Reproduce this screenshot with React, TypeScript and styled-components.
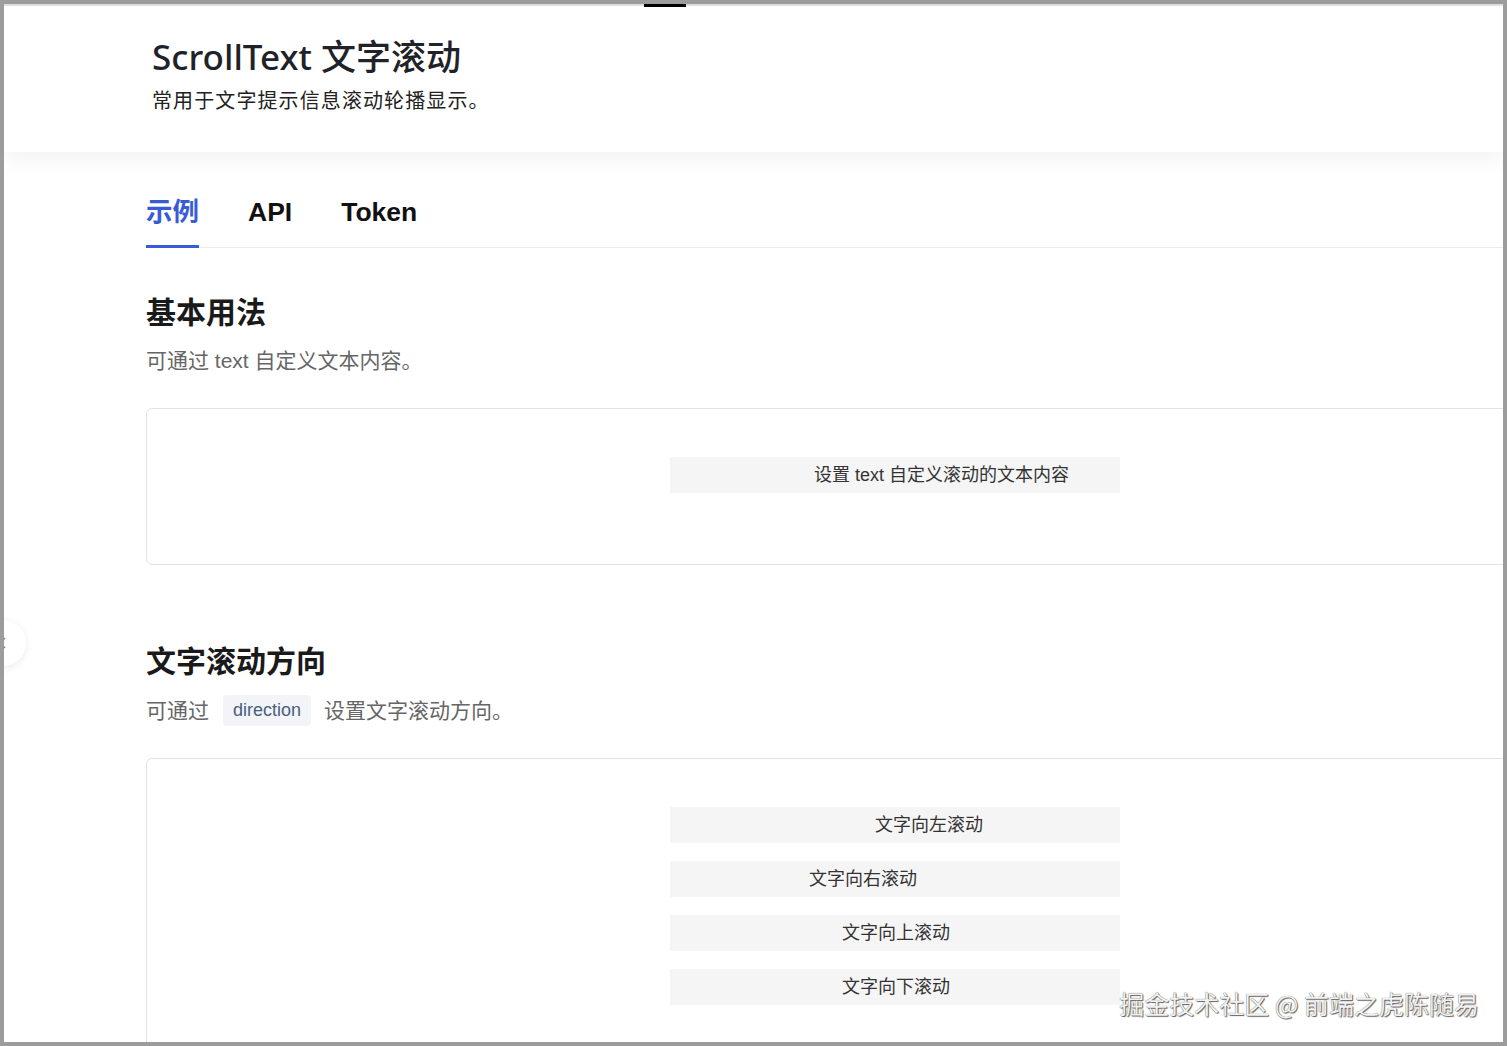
import React from "react";
import styled, { createGlobalStyle } from "styled-components";

const GlobalStyle = createGlobalStyle`
  html, body { margin: 0; padding: 0; background: #9c9c9c; }
  body { font-family: "Liberation Sans", "Noto Sans CJK SC", sans-serif; }
  * { box-sizing: border-box; }
`;

const Frame = styled.div`
  position: relative;
  margin: 4px;
  width: 1499px;
  height: 1038px;
  overflow: hidden;
  background: #ffffff;
`;

const TopMarker = styled.div`
  position: absolute;
  top: 0;
  left: 640px;
  width: 42px;
  height: 3px;
  background: #000;
  z-index: 5;
`;

const Header = styled.header`
  position: relative;
  z-index: 2;
  height: 148px;
  border-top: 2px solid #dedede;
  padding: 30px 0 0 148px;
  display: flex;
  flex-direction: column;
  gap: 8px;
  background: #fff;
  box-shadow: 0 10px 18px rgba(0, 0, 0, 0.045);
`;

const Title = styled.h1`
  margin: 0;
  font-family: "Noto Sans", "Noto Sans CJK SC", sans-serif;
  font-size: 35px;
  line-height: 42px;
  font-weight: 500;
  color: #1f2329;
`;

const Subtitle = styled.p`
  margin: 0;
  font-family: "Noto Sans CJK SC", sans-serif;
  font-size: 20px;
  line-height: 28px;
  letter-spacing: 1.1px;
  color: #222;
`;

const Main = styled.main`
  position: relative;
  z-index: 1;
  padding-left: 142px;
  width: 1700px;
`;

const TabBar = styled.nav`
  display: flex;
  gap: 49px;
  padding-top: 42px;
  border-bottom: 1px solid #ececec;
`;

const Tab = styled.div<{ $active?: boolean }>`
  font-family: "Liberation Sans", "Noto Sans CJK SC", sans-serif;
  font-size: 26.5px;
  line-height: 36px;
  font-weight: 700;
  padding-bottom: 15px;
  margin-bottom: -1px;
  color: ${(p) => (p.$active ? "#3a5bd6" : "#111")};
  border-bottom: 3px solid ${(p) => (p.$active ? "#3a5bd6" : "transparent")};
`;

const Section = styled.section<{ $top: number }>`
  padding-top: ${(p) => p.$top}px;
`;

const Heading = styled.h2`
  margin: 0;
  font-family: "Noto Sans CJK SC", sans-serif;
  font-size: 30px;
  line-height: 40px;
  font-weight: 700;
  color: #1a1a1a;
`;

const Desc = styled.p`
  margin: 16px 0 0;
  font-family: "Liberation Sans", "Noto Sans CJK SC", sans-serif;
  font-size: 21px;
  line-height: 30px;
  color: #666;
  display: flex;
  align-items: center;
`;

const Code = styled.code`
  display: inline-block;
  margin: 0 13px 0 14px;
  padding: 0 10px;
  height: 31px;
  line-height: 31px;
  border-radius: 4px;
  background: #f2f4f7;
  color: #4b5d7e;
  font-family: "Liberation Sans", sans-serif;
  font-size: 18px;
`;

const DemoBox = styled.div`
  margin-top: 32px;
  width: 1498px;
  border: 1px solid #e3e3e3;
  border-radius: 6px;
  padding: 48px 0 71px;
  display: flex;
  flex-direction: column;
  align-items: center;
  gap: 18px;
`;

const Bar = styled.div<{ $offset: number }>`
  width: 450px;
  height: 36px;
  background: #f5f5f5;
  overflow: hidden;
  white-space: nowrap;
  padding-left: ${(p) => p.$offset}px;
  font-family: "Liberation Sans", "Noto Sans CJK SC", sans-serif;
  font-size: 18px;
  line-height: 36px;
  color: #333;
`;

const SideToggle = styled.div`
  position: absolute;
  left: -24px;
  top: 616px;
  width: 46px;
  height: 46px;
  border-radius: 50%;
  background: #fff;
  box-shadow: 0 2px 8px rgba(0, 0, 0, 0.08);
  display: flex;
  align-items: center;
  justify-content: flex-end;
  padding-right: 19px;
  z-index: 3;
  color: #888;
`;

const Watermark = styled.div`
  position: absolute;
  right: 24px;
  bottom: 24px;
  font-family: "Noto Sans CJK SC", sans-serif;
  font-size: 25px;
  line-height: 30px;
  color: #f2f2f2;
  text-shadow: 0 0 1px #444, 1px 1px 1px #666;
  z-index: 4;
`;

const bars = [
  { text: "文字向左滚动", offset: 205 },
  { text: "文字向右滚动", offset: 139 },
  { text: "文字向上滚动", offset: 172 },
  { text: "文字向下滚动", offset: 172 },
];

export default function App() {
  return (
    <>
      <GlobalStyle />
      <Frame>
        <TopMarker />
        <Header>
          <Title>ScrollText 文字滚动</Title>
          <Subtitle>常用于文字提示信息滚动轮播显示。</Subtitle>
        </Header>
        <Main>
          <TabBar>
            <Tab $active>示例</Tab>
            <Tab>API</Tab>
            <Tab>Token</Tab>
          </TabBar>
          <Section $top={42}>
            <Heading>基本用法</Heading>
            <Desc>可通过 text 自定义文本内容。</Desc>
            <DemoBox>
              <Bar $offset={144}>设置 text 自定义滚动的文本内容</Bar>
            </DemoBox>
          </Section>
          <Section $top={74}>
            <Heading>文字滚动方向</Heading>
            <Desc>
              可通过<Code>direction</Code>设置文字滚动方向。
            </Desc>
            <DemoBox>
              {bars.map((b) => (
                <Bar key={b.text} $offset={b.offset}>
                  {b.text}
                </Bar>
              ))}
            </DemoBox>
          </Section>
        </Main>
        <SideToggle>
          <svg width="8" height="12" viewBox="0 0 8 12" fill="none">
            <path d="M6 1L1.5 6L6 11" stroke="#888" strokeWidth="1.4" />
          </svg>
        </SideToggle>
        <Watermark>掘金技术社区 @ 前端之虎陈随易</Watermark>
      </Frame>
    </>
  );
}
